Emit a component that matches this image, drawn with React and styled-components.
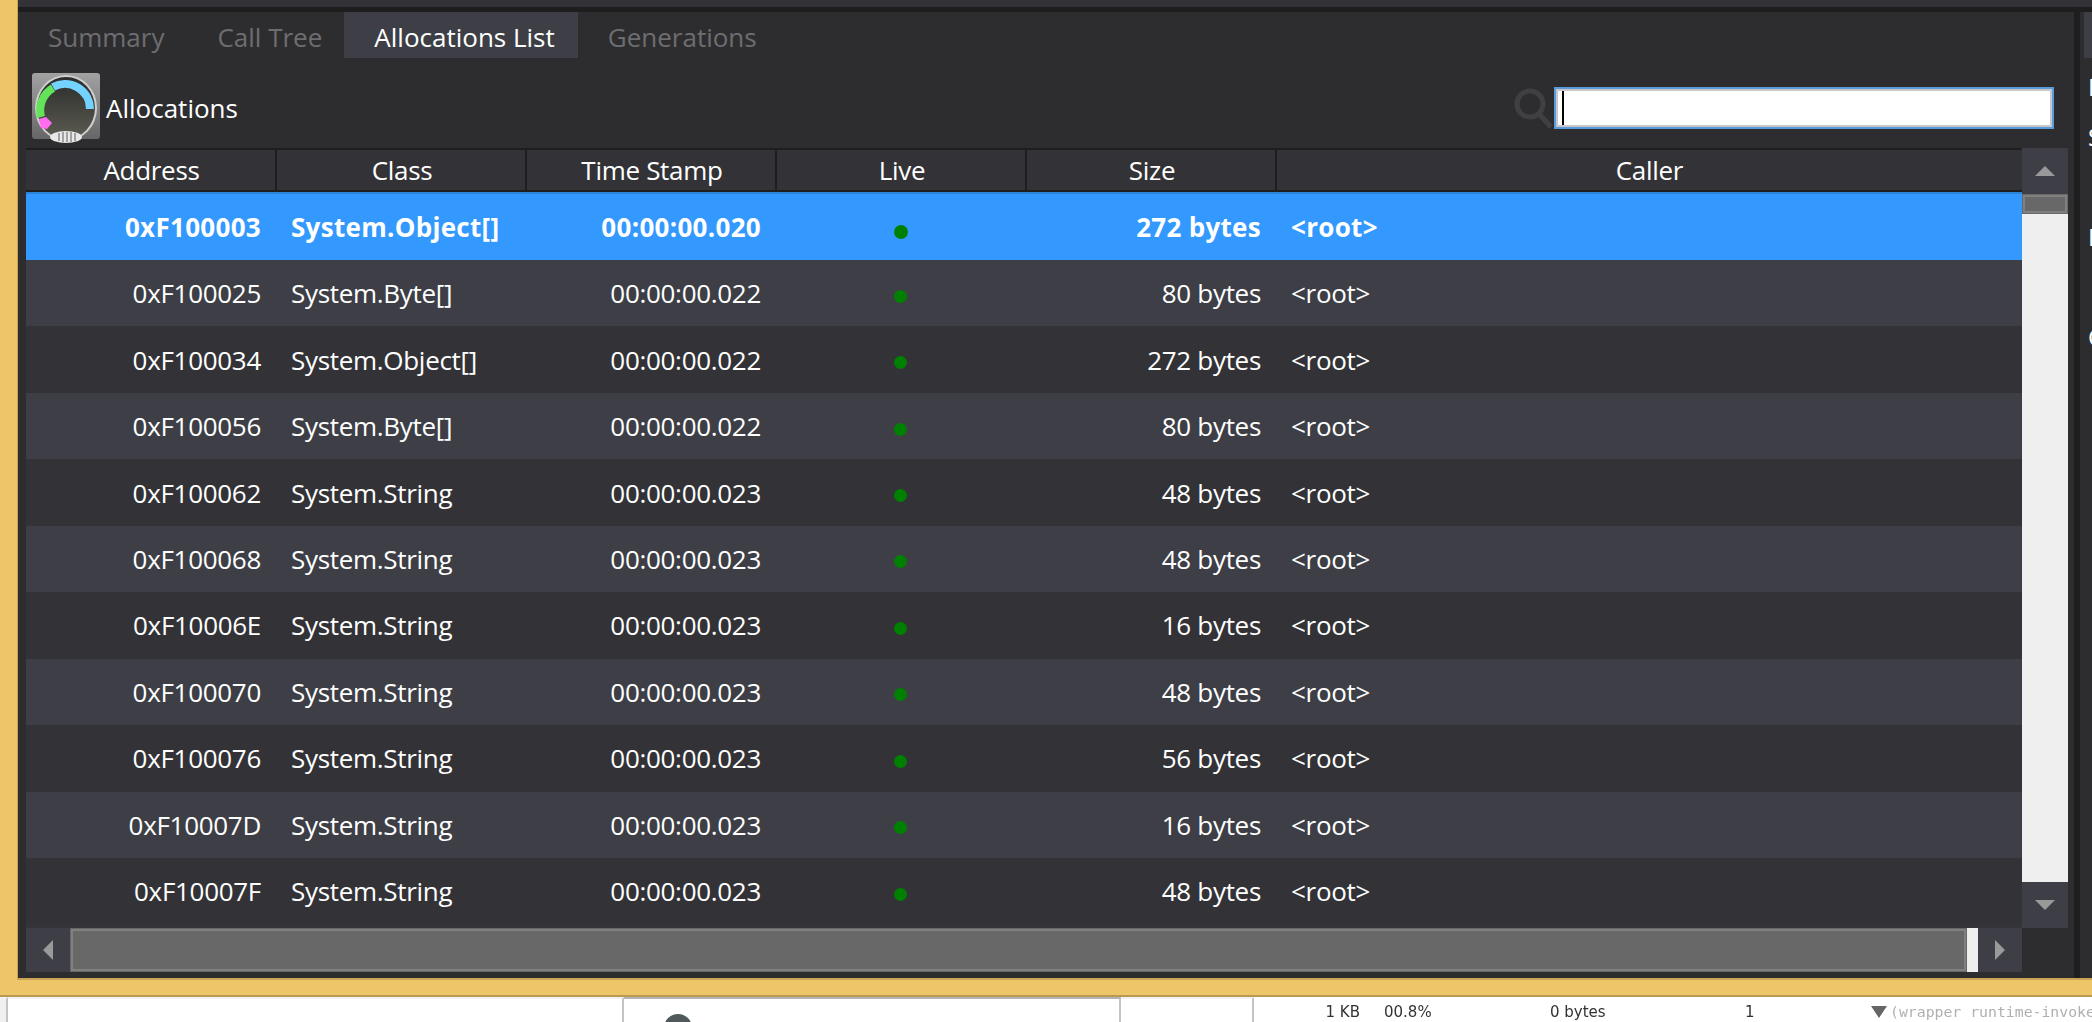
import React from 'react'
import styled, { createGlobalStyle } from 'styled-components'

const GlobalStyle = createGlobalStyle`
    html, body {
        margin: 0;
        padding: 0;
        background: #fff;
        overflow: hidden;
    }
`

const Page = styled.div`
    display: flex;
    flex-direction: column;
    width: 2092px;
    height: 1022px;
    overflow: hidden;
    font-family: "Open Sans", "Noto Sans", sans-serif;
`

const GoldFrame = styled.div`
    display: flex;
    height: 997px;
    box-sizing: border-box;
    flex-shrink: 0;
    background: #eec568;
    padding: 0 0 15px 17px;
    border-bottom: 2px solid #b89a50;
`

const Shell = styled.div`
    flex: 1;
    min-width: 0;
    display: flex;
    flex-direction: column;
    border-left: 1px solid #c8a552;
    border-bottom: 2px solid #c8a552;
    background: #2d2d30;
`

const TopBand = styled.div`
    height: 7px;
    flex-shrink: 0;
    background: #333337;
    border-bottom: 5px solid #1e1e1e;
`

const Body = styled.div`
    flex: 1;
    min-height: 0;
    display: flex;
`

const Main = styled.div`
    flex: 1;
    min-width: 0;
    display: flex;
    flex-direction: column;
`

const Tabs = styled.div`
    display: flex;
    height: 46px;
    flex-shrink: 0;
`

const Tab = styled.div`
    display: flex;
    align-items: center;
    padding: 3px 23px 0 30px;
    margin-left: ${(p) => (p.$active ? '-1px' : '0')};
    font-size: 26px;
    color: ${(p) => (p.$active ? '#ffffff' : '#6d6d70')};
    background: ${(p) => (p.$active ? '#3e3f46' : 'transparent')};
`

const Toolbar = styled.div`
    display: flex;
    align-items: center;
    height: 90px;
    flex-shrink: 0;
    box-sizing: border-box;
    padding: 10px 20px 0 14px;
`

const ToolbarLabel = styled.span`
    margin-left: 6px;
    font-size: 26px;
    color: #fff;
`

const SearchIcon = styled.svg`
    margin-left: auto;
    margin-right: 1px;
    flex-shrink: 0;
`

const SearchBox = styled.div`
    display: flex;
    align-items: stretch;
    width: 500px;
    height: 42px;
    box-sizing: border-box;
    background: #fff;
    border: 2px solid #5b9bdc;
    box-shadow: inset 0 0 0 2px #c8c8cc;
    padding: 2px 0 2px 6px;
`

const Caret = styled.div`
    width: 2px;
    background: #000;
`

const Grid = styled.div`
    flex: 1;
    min-height: 0;
    display: flex;
    flex-direction: column;
    margin: 0 6px 8px 8px;
`

const GridTop = styled.div`
    display: flex;
    height: 780px;
    flex-shrink: 0;
`

const Table = styled.div`
    flex: 1;
    min-width: 0;
    display: flex;
    flex-direction: column;
    background: #34343a;
    overflow: hidden;
`

const HeaderRow = styled.div`
    display: grid;
    grid-template-columns: 251px 250px 250px 250px 250px 1fr;
    height: 44px;
    flex-shrink: 0;
    box-sizing: border-box;
    background: #333337;
    border-top: 2px solid #1e1e1e;
    border-bottom: 2px solid #1e1e1e;
`

const HeaderCell = styled.div`
    display: flex;
    align-items: center;
    justify-content: center;
    font-size: 26px;
    letter-spacing: -0.3px;
    color: #fff;
    box-shadow: ${(p) => (p.$last ? 'none' : 'inset -2px 0 0 #1e1e1e')};
`

const Rows = styled.div`
    flex: 1;
    min-height: 0;
`

const Row = styled.div`
    display: grid;
    grid-template-columns: 251px 250px 250px 250px 250px 1fr;
    box-sizing: border-box;
    height: ${(p) => (p.$selected ? '68px' : '66.45px')};
    background: ${(p) => (p.$selected ? '#3399ff' : p.$alt ? '#3e3f46' : '#333337')};
    border-top: ${(p) => (p.$selected ? '2px solid #2b84d6' : 'none')};
    font-size: 26px;
    letter-spacing: ${(p) => (p.$selected ? '0.3px' : '-0.3px')};
    font-weight: ${(p) => (p.$selected ? 700 : 400)};
    color: #fff;
`

const Cell = styled.div`
    display: flex;
    align-items: center;
    justify-content: ${(p) => (p.$align === 'right' ? 'flex-end' : p.$align === 'center' ? 'center' : 'flex-start')};
    padding: ${(p) => (p.$align === 'right' ? '0 16px 0 0' : p.$align === 'center' ? '0 3px 0 0' : '0 0 0 14px')};
    white-space: nowrap;
`

const LiveDot = styled.span`
    width: ${(p) => (p.$big ? '14px' : '13px')};
    height: ${(p) => (p.$big ? '14px' : '13px')};
    margin-top: ${(p) => (p.$big ? '10px' : '6px')};
    border-radius: 50%;
    background: #008000;
`

const VScroll = styled.div`
    width: 46px;
    flex-shrink: 0;
    display: flex;
    flex-direction: column;
    background: #efefef;
`

const VButton = styled.div`
    display: flex;
    align-items: center;
    justify-content: center;
    height: ${(p) => p.$h}px;
    flex-shrink: 0;
    margin-top: ${(p) => (p.$end ? 'auto' : '0')};
    background: #3e3f46;
`

const VThumb = styled.div`
    height: 20px;
    flex-shrink: 0;
    background: #686868;
    box-shadow: inset 0 0 0 1px #686868, inset 0 0 0 3px #808080;
`

const HScroll = styled.div`
    display: flex;
    height: 44px;
    flex-shrink: 0;
    width: 1996px;
    background: #efefef;
`

const HButton = styled.div`
    display: flex;
    align-items: center;
    justify-content: center;
    width: 44px;
    flex-shrink: 0;
    margin-left: ${(p) => (p.$end ? 'auto' : '0')};
    background: #3e3f46;
`

const HThumb = styled.div`
    width: 1897px;
    flex-shrink: 0;
    background: #686868;
    box-shadow: inset 0 0 0 1px #686868, inset 0 0 0 3px #808080;
`

const Arrow = styled.svg`
    display: block;
    flex-shrink: 0;
`

const Divider = styled.div`
    width: 6px;
    flex-shrink: 0;
    background: #1e1e1e;
`

const SidePanel = styled.div`
    width: 12px;
    flex-shrink: 0;
    overflow: hidden;
    padding-left: 4px;
    box-sizing: border-box;
`

const SideTab = styled.div`
    height: 46px;
    width: 40px;
    background: #3e3f46;
`

const SideLines = styled.div`
    display: flex;
    flex-direction: column;
    padding: 4px 0 0 4px;
    font-size: 24px;
    line-height: 50px;
    color: #fff;
`

const BottomStrip = styled.div`
    display: flex;
    flex: 1;
    min-height: 0;
    background: #fff;
    font-family: "DejaVu Sans", sans-serif;
    font-size: 15px;
    color: #333;
    overflow: hidden;
`

const StripCell = styled.div`
    flex-shrink: 0;
    width: ${(p) => p.$w}px;
    box-sizing: border-box;
    background: ${(p) => (p.$bg ? p.$bg : 'transparent')};
    border-right: ${(p) => (p.$line ? '2px solid #c4c4c4' : 'none')};
    border-top: ${(p) => (p.$top ? '2px solid #b4b4b4' : '2px solid #f2f2f2')};
    overflow: hidden;
`

const Avatar = styled.div`
    width: 28px;
    height: 28px;
    margin: 15px 0 0 40px;
    border-radius: 50%;
    background: #505a5a;
`

const StatsRow = styled.div`
    flex: 1;
    min-width: 0;
    display: flex;
    align-items: center;
    height: 25px;
    box-sizing: border-box;
    padding-top: 4px;
    white-space: nowrap;
    filter: blur(0.4px);
`

const Stat = styled.span`
    flex-shrink: 0;
    width: ${(p) => p.$w}px;
    text-align: ${(p) => (p.$right ? 'right' : 'left')};
`

const Wrapper = styled.span`
    flex-shrink: 0;
    margin-left: 3px;
    font-family: "DejaVu Sans Mono", monospace;
    font-size: 14.8px;
    color: #b0b0b0;
`

const columns = ['Address', 'Class', 'Time Stamp', 'Live', 'Size', 'Caller']

const allocations = [
    ['0xF100003', 'System.Object[]', '00:00:00.020', '272 bytes'],
    ['0xF100025', 'System.Byte[]', '00:00:00.022', '80 bytes'],
    ['0xF100034', 'System.Object[]', '00:00:00.022', '272 bytes'],
    ['0xF100056', 'System.Byte[]', '00:00:00.022', '80 bytes'],
    ['0xF100062', 'System.String', '00:00:00.023', '48 bytes'],
    ['0xF100068', 'System.String', '00:00:00.023', '48 bytes'],
    ['0xF10006E', 'System.String', '00:00:00.023', '16 bytes'],
    ['0xF100070', 'System.String', '00:00:00.023', '48 bytes'],
    ['0xF100076', 'System.String', '00:00:00.023', '56 bytes'],
    ['0xF10007D', 'System.String', '00:00:00.023', '16 bytes'],
    ['0xF10007F', 'System.String', '00:00:00.023', '48 bytes'],
]

const GaugeIcon = () => (
    <svg width="68" height="70" viewBox="0 0 68 70" style={{ flexShrink: 0 }}>
        <defs>
            <linearGradient id="plate" x1="0" y1="0" x2="0" y2="1">
                <stop offset="0" stopColor="#a2a2a2" />
                <stop offset="1" stopColor="#666" />
            </linearGradient>
            <linearGradient id="dial" x1="0" y1="0" x2="0" y2="1">
                <stop offset="0" stopColor="#2b2b2b" />
                <stop offset="1" stopColor="#5c5c52" />
            </linearGradient>
        </defs>
        <rect x="0" y="0" width="68" height="66" rx="3" fill="url(#plate)" />
        <ellipse cx="34" cy="35" rx="31" ry="33" fill="#cfcfcf" />
        <ellipse cx="34" cy="35" rx="29" ry="31" fill="url(#dial)" />
        <path d="M21 14 A25 25 0 0 1 58 36" fill="none" stroke="#74d2ff" strokeWidth="8" />
        <path d="M21 15 A26 26 0 0 0 9 44" fill="none" stroke="#62e35a" strokeWidth="8" />
        <path d="M7 46 L14 44 L20 50 L15 56 L9 55 Z" fill="#ff6cf0" />
        <ellipse cx="34" cy="64" rx="16" ry="6" fill="#e8e8e8" />
        <path d="M27 60V68M31 59V69M35 59V69M39 59V69M43 60V68" stroke="#8a8a8a" strokeWidth="1.5" />
    </svg>
)

const triangles = {
    up: { w: 20, h: 10, points: '10,0 20,10 0,10' },
    down: { w: 20, h: 10, points: '0,0 20,0 10,10' },
    left: { w: 10, h: 20, points: '10,0 10,20 0,10' },
    right: { w: 10, h: 20, points: '0,0 10,10 0,20' },
    caret: { w: 16, h: 12, points: '0,0 16,0 8,12' },
}

const Triangle = ({ dir, color = '#999' }) => {
    const { w, h, points } = triangles[dir]

    return (
        <Arrow width={w} height={h} viewBox={`0 0 ${w} ${h}`}>
            <polygon points={points} fill={color} />
        </Arrow>
    )
}

const App = () => (
    <Page>
        <GlobalStyle />
        <GoldFrame>
            <Shell>
                <TopBand />
                <Body>
                    <Main>
                        <Tabs>
                            <Tab>Summary</Tab>
                            <Tab>Call Tree</Tab>
                            <Tab $active>Allocations List</Tab>
                            <Tab>Generations</Tab>
                        </Tabs>
                        <Toolbar>
                            <GaugeIcon />
                            <ToolbarLabel>Allocations</ToolbarLabel>
                            <SearchIcon width="40" height="42" viewBox="0 0 40 42">
                                <circle cx="17" cy="17" r="13" fill="none" stroke="#404043" strokeWidth="5" />
                                <path d="M26 27 L38 40" stroke="#404043" strokeWidth="5" />
                            </SearchIcon>
                            <SearchBox>
                                <Caret />
                            </SearchBox>
                        </Toolbar>
                        <Grid>
                            <GridTop>
                                <Table>
                                    <HeaderRow>
                                        {columns.map((name, i) => (
                                            <HeaderCell key={name} $last={i === columns.length - 1}>{name}</HeaderCell>
                                        ))}
                                    </HeaderRow>
                                    <Rows>
                                        {allocations.map(([address, cls, time, size], i) => (
                                            <Row key={address} $selected={i === 0} $alt={i % 2 === 1}>
                                                <Cell $align="right">{address}</Cell>
                                                <Cell>{cls}</Cell>
                                                <Cell $align="right">{time}</Cell>
                                                <Cell $align="center"><LiveDot $big={i === 0} /></Cell>
                                                <Cell $align="right">{size}</Cell>
                                                <Cell>&lt;root&gt;</Cell>
                                            </Row>
                                        ))}
                                    </Rows>
                                </Table>
                                <VScroll>
                                    <VButton $h={46}><Triangle dir="up" /></VButton>
                                    <VThumb />
                                    <VButton $h={46} $end><Triangle dir="down" /></VButton>
                                </VScroll>
                            </GridTop>
                            <HScroll>
                                <HButton><Triangle dir="left" /></HButton>
                                <HThumb />
                                <HButton $end><Triangle dir="right" /></HButton>
                            </HScroll>
                        </Grid>
                    </Main>
                    <Divider />
                    <SidePanel>
                        <SideTab />
                        <SideLines>
                            <span>D</span>
                            <span>S</span>
                            <span>&nbsp;</span>
                            <span>D</span>
                            <span>&nbsp;</span>
                            <span>C</span>
                        </SideLines>
                    </SidePanel>
                </Body>
            </Shell>
        </GoldFrame>
        <BottomStrip>
            <StripCell $w={8} $bg="#f0f0f0" $line />
            <StripCell $w={616} $line />
            <StripCell $w={497} $line $top>
                <Avatar />
            </StripCell>
            <StripCell $w={133} $line />
            <StatsRow>
                <Stat $w={106} $right>1 KB</Stat>
                <Stat $w={24} />
                <Stat $w={166}>00.8%</Stat>
                <Stat $w={195}>0 bytes</Stat>
                <Stat $w={126}>1</Stat>
                <Triangle dir="caret" color="#666" />
                <Wrapper>(wrapper runtime-invoke</Wrapper>
            </StatsRow>
        </BottomStrip>
    </Page>
)

export default App
